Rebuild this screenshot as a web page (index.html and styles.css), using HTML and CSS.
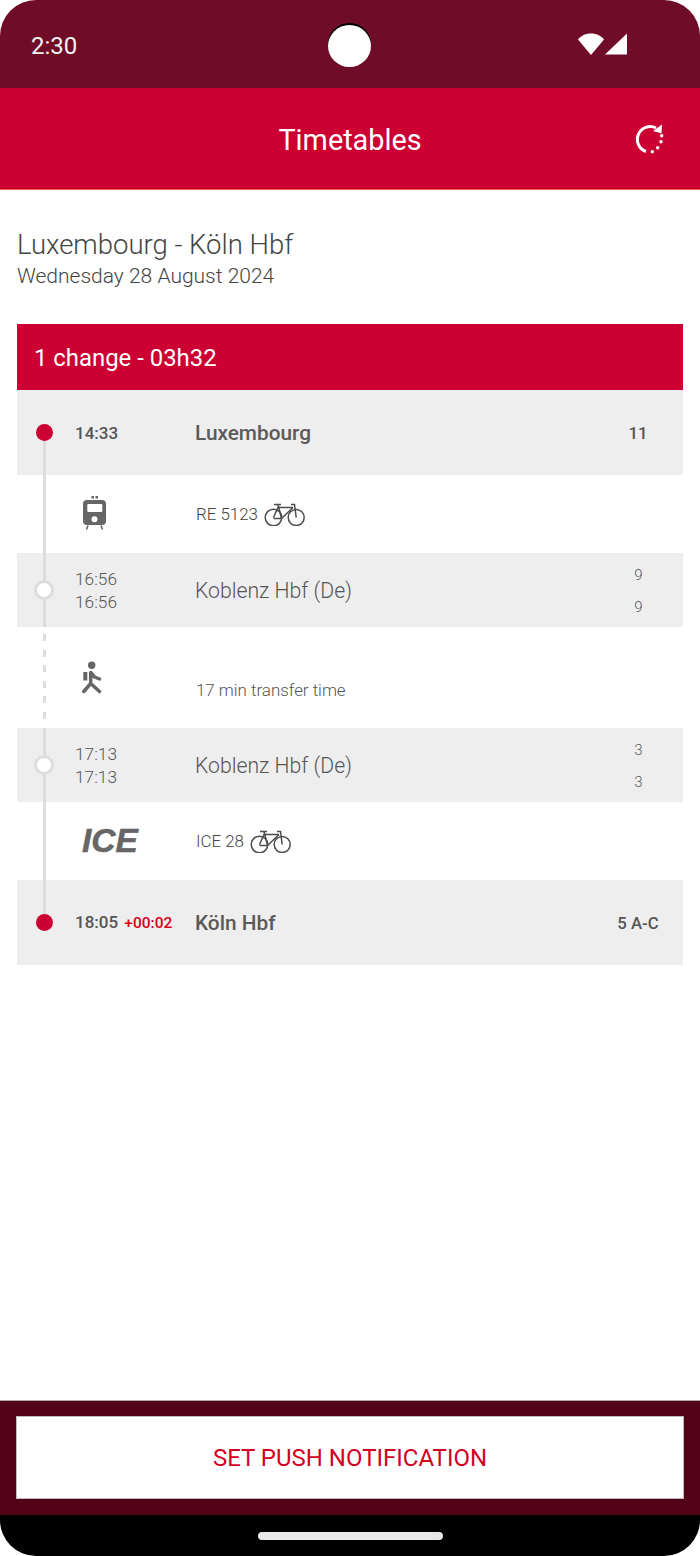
FILE: index.html
```html
<!DOCTYPE html>
<html lang="en">
<head>
<meta charset="utf-8">
<title>Timetables</title>
<link rel="stylesheet" href="styles.css">
</head>
<body>
<svg class="sprites" width="0" height="0" aria-hidden="true">
  <symbol id="bike" viewBox="0 0 41 24">
    <g fill="none" stroke="#4d4d4d" stroke-width="1.500">
      <circle cx="9.500" cy="15.500" r="8.300"/>
      <circle cx="32.200" cy="15.500" r="8"/>
      <path d="M9.500 15.500 14 5.500H29M17.500 16.500 14 2.500M10 2.500h7M29 5.500 17.500 16.500H9.500M27 2.500h3.500l1.700 13"/>
    </g>
  </symbol>
</svg>
<div class="phone">
  <header class="status">
    <span class="clock">2:30</span>
    <span class="camera"></span>
    <span class="status-icons">
      <svg width="50" height="22" viewBox="0 0 50 22"><path fill="#fff" d="M0 6.500C3 2.600 7.600 0.500 13 0.500s10 2.100 13 6L13 22Z"/><path fill="#fff" d="M49 0.500V21.500H27Z"/></svg>
    </span>
  </header>
  <div class="appbar">
    <h1 class="title">Timetables</h1>
    <svg class="refresh" width="32" height="32" viewBox="0 0 32 32">
      <path fill="none" stroke="#fff" stroke-width="3" d="M23 4A12.800 12.800 0 1 0 13 27.500"/>
      <path fill="#fff" d="M29 0.500 28.500 9.500 20 7Z"/>
      <g fill="#fff"><circle cx="19.300" cy="27.700" r="1.700"/><circle cx="24.700" cy="23.700" r="1.700"/><circle cx="28" cy="17.700" r="1.700"/><circle cx="28.700" cy="11.700" r="1.700"/></g>
    </svg>
  </div>
  <main class="content">
    <div class="route">
      <div class="route-name">Luxembourg - Köln Hbf</div>
      <div class="route-date">Wednesday 28 August 2024</div>
    </div>
    <div class="summary">1 change - 03h32</div>
    <section class="journey">
      <div class="row stop main stop-first">
        <div class="rail line-bottom"><span class="dot"></span></div>
        <div class="times"><div>14:33</div></div>
        <div class="name">Luxembourg</div>
        <div class="platforms"><div>11</div></div>
      </div>
      <div class="row leg leg-train">
        <div class="rail line-full"></div>
        <div class="leg-icon">
          <svg class="train" width="26" height="36" viewBox="0 0 26 36"><g fill="#666"><rect x="9.500" y="0" width="2.500" height="2.500"/><rect x="13.500" y="0" width="2.500" height="2.500"/><path fill-rule="evenodd" d="M5 4h15a4 4 0 0 1 4 4v17a4 4 0 0 1-4 4H5a4 4 0 0 1-4-4V8a4 4 0 0 1 4-4ZM6.300 8a1 1 0 0 0-1 1v6a1 1 0 0 0 1 1h13a1 1 0 0 0 1-1V9a1 1 0 0 0-1-1ZM12.500 20.300a3 3 0 1 0 0 6 3 3 0 0 0 0-6Z"/></g><path fill="none" stroke="#666" stroke-width="1.600" d="M6 29.500 4.500 33.500M19 29.500l1.500 4"/></svg>
        </div>
        <div class="leg-text">RE 5123 <svg class="bike" width="41" height="24"><use href="#bike"/></svg></div>
      </div>
      <div class="row stop">
        <div class="rail line-full"><span class="dot open"></span></div>
        <div class="times"><div>16:56</div><div>16:56</div></div>
        <div class="name">Koblenz Hbf (De)</div>
        <div class="platforms wide"><div>9</div><div>9</div></div>
      </div>
      <div class="row leg leg-walk">
        <div class="rail line-dash"></div>
        <div class="leg-icon">
          <svg class="walk" width="24" height="34" viewBox="0 0 24 34"><circle cx="9.700" cy="4.300" r="3.700" fill="#666"/><rect x="1.300" y="11" width="4" height="8.500" fill="#666"/><path fill="none" stroke="#666" stroke-width="3.500" stroke-linecap="round" stroke-linejoin="round" d="M1.800 30.500 8.700 22.500 17.500 30.500M8.700 22.500V11.500L12.500 16 17.500 18"/></svg>
        </div>
        <div class="leg-text">17 min transfer time</div>
      </div>
      <div class="row stop">
        <div class="rail line-full"><span class="dot open"></span></div>
        <div class="times"><div>17:13</div><div>17:13</div></div>
        <div class="name">Koblenz Hbf (De)</div>
        <div class="platforms wide"><div>3</div><div>3</div></div>
      </div>
      <div class="row leg leg-train">
        <div class="rail line-full"></div>
        <div class="leg-icon"><span class="ice">ICE</span></div>
        <div class="leg-text">ICE 28 <svg class="bike" width="41" height="24"><use href="#bike"/></svg></div>
      </div>
      <div class="row stop main stop-last">
        <div class="rail line-top"><span class="dot"></span></div>
        <div class="times"><div>18:05 <span class="delay">+00:02</span></div></div>
        <div class="name">Köln Hbf</div>
        <div class="platforms"><div>5 A-C</div></div>
      </div>
    </section>
  </main>
  <footer class="footer">
    <button class="push" type="button">SET PUSH NOTIFICATION</button>
  </footer>
  <div class="navbar"><span class="home"></span></div>
</div>
</body>
</html>
```

FILE: styles.css
```css
* { box-sizing: border-box; }
html, body { margin: 0; padding: 0; background: #fff; }
body { font-family: Roboto, "Liberation Sans", sans-serif; color: #555; }
.sprites { position: absolute; }
.phone { width: 700px; height: 1556px; display: flex; flex-direction: column; border-radius: 36px; overflow: hidden; background: #fff; }

.status { position: relative; height: 88px; flex: none; background: #6f0d28; display: flex; align-items: center; justify-content: space-between; padding: 3px 72px 0 31px; }
.clock { font-size: 24px; color: #f2f2f2; }
.camera { position: absolute; left: 328px; top: 25px; width: 43px; height: 42px; border-radius: 50%; background: #fff; box-shadow: 0 -2px 0 0 #000; }
.status-icons { display: flex; margin-top: -3px; }

.appbar { height: 102px; flex: none; background: #cc0033; border-bottom: 1px solid #f0604a; display: flex; align-items: center; justify-content: center; position: relative; padding-top: 3px; }
.title { margin: 0; font-size: 28.800px; font-weight: 400; color: #fff; }
.refresh { position: absolute; right: 35px; top: 36px; }

.content { flex: 1; padding: 0 17px; }
.route { padding: 37px 0 35px; }
.route-name { font-size: 27.500px; line-height: 36px; font-weight: 300; color: #444; }
.route-date { font-size: 21px; line-height: 26px; font-weight: 300; color: #444; }
.summary { height: 66px; background: #cc0033; color: #fff; font-size: 23.900px; display: flex; align-items: center; padding: 1px 0 0 17px; }

.row { display: grid; grid-template-columns: 58px 120px 1fr 90px; align-items: center; }
.stop { background: #eee; height: 74px; }
.main { height: 85px; }
.leg { height: 78px; background: #fff; }
.leg-walk { height: 101px; }
.rail { position: relative; height: 100%; display: flex; align-items: center; justify-content: center; width: 54px; }
.rail::before { content: ""; position: absolute; left: 25.500px; width: 3px; background: #ddd; }
.line-full::before { top: 0; bottom: 0; }
.line-bottom::before { top: 50%; bottom: 0; }
.line-top::before { top: 0; bottom: 50%; }
.line-dash::before { top: 7px; bottom: 7px; background: repeating-linear-gradient(#ddd 0 7px, transparent 7px 15.500px); }
.dot { position: relative; width: 17px; height: 17px; border-radius: 50%; background: #cc0033; }
.dot.open { width: 20px; height: 20px; background: #fff; border: 3px solid #ddd; }

.times { font-size: 17.300px; line-height: 23px; color: #555; font-weight: 300; padding-top: 1px; }
.main .times { font-weight: 500; font-size: 17px; }
.delay { color: #d9001b; font-size: 15.500px; margin-left: 2px; }
.name { font-size: 21.200px; color: #555; font-weight: 300; }
.main .name { font-weight: 500; font-size: 20.800px; color: #5a5a5a; padding-top: 1px; }
.platforms { justify-self: center; text-align: center; font-size: 16.800px; font-weight: 500; color: #555; padding-top: 1px; }
.wide { font-weight: 300; line-height: 32px; font-size: 15px; margin: 0 0 0 1px; padding-top: 1px; }

.leg-icon { display: flex; align-items: center; height: 100%; padding-left: 7px; }
.leg-text { grid-column: 3 / 5; display: flex; align-items: center; gap: 6px; font-size: 16.900px; padding-left: 1px; font-weight: 300; color: #444; }
.leg-walk .leg-text { padding-top: 24px; color: #555; }
.ice { font-family: "Liberation Sans", sans-serif; font-weight: 700; font-style: italic; font-size: 33.500px; color: #666; -webkit-text-stroke: 0.500px #666; }

.footer { flex: none; height: 115px; background: #520317; border-top: 1px solid #b0a8aa; padding: 15px 16px 16px; }
.push { display: block; width: 100%; height: 83px; background: #fff; border: 0; box-shadow: inset 0 0 0 1px #bbb; font-family: Roboto, sans-serif; font-size: 24px; color: #d3001f; padding: 0; }
.navbar { flex: none; height: 41px; background: #000; display: flex; justify-content: center; align-items: center; }
.home { width: 185px; height: 8px; border-radius: 4px; background: #e8e8e8; }
```
